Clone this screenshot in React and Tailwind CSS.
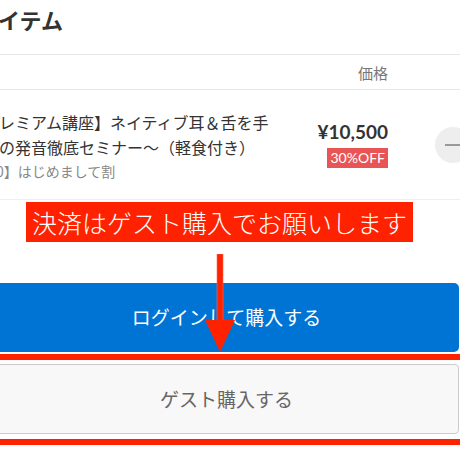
export default function App() {
  const jp = { fontFamily: '"Noto Sans CJK JP", sans-serif' }
  return (
    <div className="relative w-[460px] h-[460px] overflow-hidden bg-white" style={jp}>
      <div className="h-[55px] border-b border-[#e8e8e8] flex items-start">
        <h2 className="text-[22px] leading-[38px] font-bold text-[#333] -ml-[2px]">イテム</h2>
      </div>
      <div className="h-[35px] border-b border-[#e8e8e8] flex items-center justify-end pr-[72px] pt-[3px]">
        <span className="text-[15px] text-[#777]">価格</span>
      </div>
      <div className="h-[110px] border-b border-[#eeeeee] flex items-start">
        <div className="flex-1 pt-[20px] -ml-[1px]">
          <p className="text-[16px] leading-[25px] text-[#333] whitespace-nowrap">レミアム講座】ネイティブ耳＆舌を手</p>
          <p className="text-[16px] leading-[25px] text-[#333] whitespace-nowrap">の発音徹底セミナー〜（軽食付き）</p>
          <p className="text-[14px] leading-[22px] text-[#888] whitespace-nowrap -ml-[3px]">0】はじめまして割</p>
        </div>
        <div className="flex flex-col items-end pt-[30px] mr-[47px]">
          <span className="text-[19px] leading-[24px] font-bold text-[#333]" style={{ fontFamily: 'Lato, sans-serif' }}>¥10,500</span>
          <span className="mt-[4px] h-[20px] px-[3px] bg-[#e95454] text-white text-[14px] leading-[20px]" style={{ fontFamily: 'Lato, sans-serif' }}>30%OFF</span>
        </div>
        <div className="mt-[37px] w-[36px] h-[36px] rounded-full bg-[#eeeeee] flex items-center pl-[10px] shrink-0 -mr-[11px]">
          <span className="block w-[16px] h-[2px] bg-[#999]" />
        </div>
      </div>
      <div className="ml-[26px] mt-[2px] w-[387px] h-[40px] bg-[#ff2200] flex items-center justify-center">
        <span className="text-[25px] leading-none font-light text-white whitespace-nowrap">決済はゲスト購入でお願いします</span>
      </div>
      <button className="mt-[41px] -ml-[6px] w-[465px] h-[69px] rounded-[5px] bg-[#0074d4] text-white text-[19px] flex items-center justify-center">
        ログインして購入する
      </button>
      <div className="mt-[2px] h-[6px] bg-[#ff2200]" />
      <button className="mt-[4px] -ml-[6px] w-[465px] h-[70px] rounded-[4px] border border-[#cccccc] bg-[#f8f8f8] text-[#666] text-[19px] flex items-center justify-center">
        ゲスト購入する
      </button>
      <div className="mt-[5px] h-[6px] bg-[#ff2200]" />
      <svg className="absolute left-[204px] top-[254px]" width="32" height="100" viewBox="0 0 32 100">
        <rect x="13" y="0" width="6" height="70" fill="#ff2200" stroke="#ff6a55" strokeWidth="0.6" />
        <polygon points="1,66 31,66 16,98" fill="#ff2200" />
      </svg>
    </div>
  )
}
